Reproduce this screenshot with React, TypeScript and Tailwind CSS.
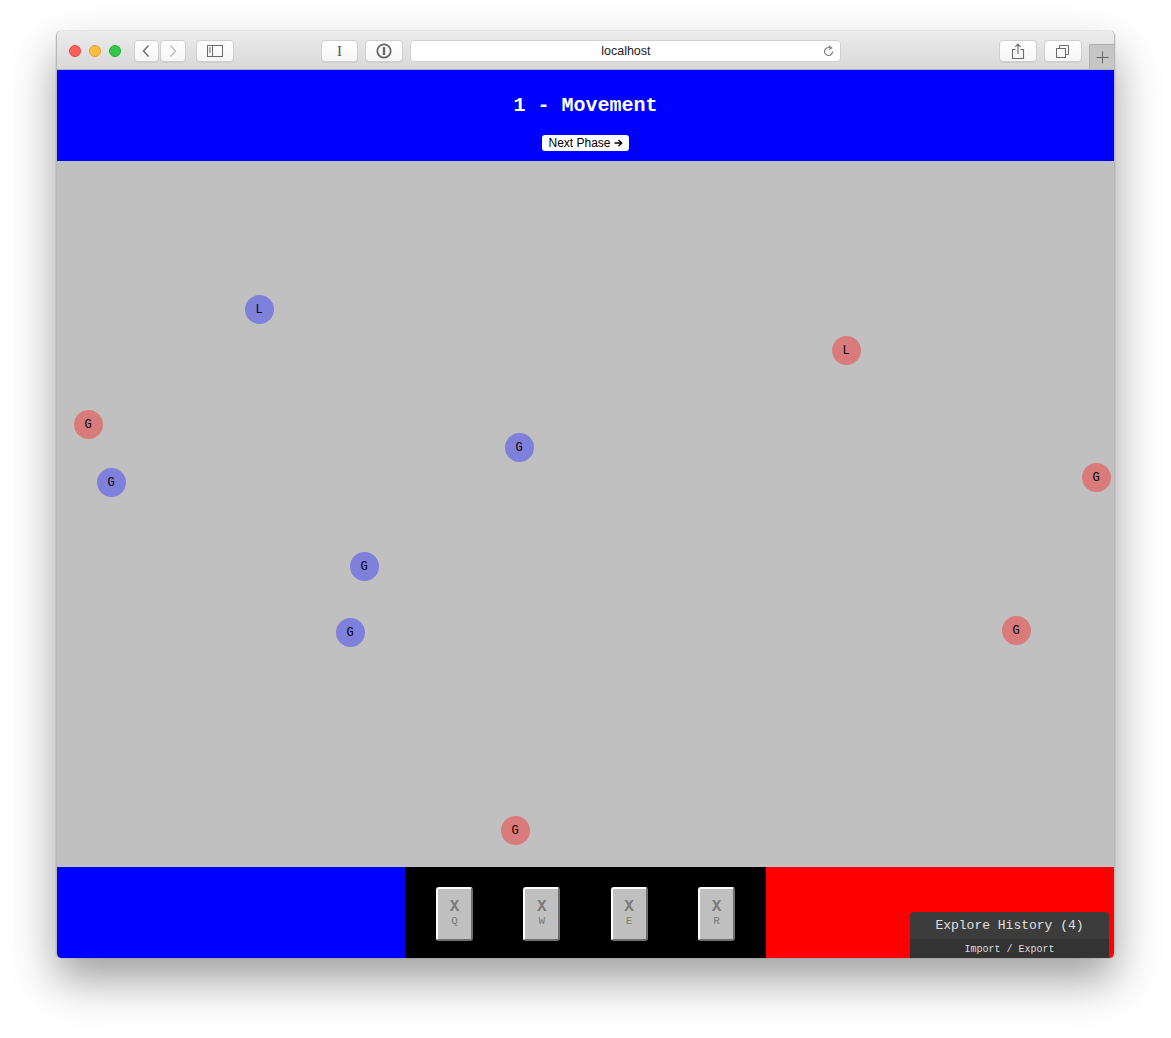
import React from "react";

type Unit = { x: number; y: number; t: string; side: "b" | "r" };

const units: Unit[] = [
  { x: 259, y: 309, t: "L", side: "b" },
  { x: 846, y: 350, t: "L", side: "r" },
  { x: 88, y: 424, t: "G", side: "r" },
  { x: 519, y: 447, t: "G", side: "b" },
  { x: 111, y: 482, t: "G", side: "b" },
  { x: 1096, y: 477, t: "G", side: "r" },
  { x: 364, y: 566, t: "G", side: "b" },
  { x: 350, y: 632, t: "G", side: "b" },
  { x: 1016, y: 630, t: "G", side: "r" },
  { x: 515, y: 830, t: "G", side: "r" },
];

const mono = { fontFamily: '"Liberation Mono", "Courier New", monospace' };

function TBtn({ w, children, ml }: { w: string; children?: React.ReactNode; ml: string }) {
  return (
    <div
      className={`${w} ${ml} h-[22px] rounded-[4px] border border-[#cfcfcf] bg-gradient-to-b from-white to-[#f6f6f6] shadow-[0_1px_0_rgba(0,0,0,0.06)] flex items-center justify-center text-[#6b6b6b]`}
    >
      {children}
    </div>
  );
}

function Card({ k }: { k: string }) {
  return (
    <div className="w-[37px] h-[54px] rounded-[3px] bg-[#c0c0c0] border-t-2 border-l-2 border-white border-r-2 border-b-2 border-r-[#6e6e6e] border-b-[#6e6e6e] flex flex-col items-center justify-center" style={mono}>
      <div className="text-[16px] font-bold leading-[16px] text-[#7a7a7a]">X</div>
      <div className="text-[11px] leading-[13px] text-[#7a7a7a]">{k}</div>
    </div>
  );
}

export default function App() {
  return (
    <div className="w-[1171px] h-[1038px] bg-white pt-[31px] pl-[56px]" style={{ fontFamily: '"Liberation Sans", Arial, sans-serif' }}>
      <div className="w-[1059px] h-[927px] rounded-[5px] overflow-hidden shadow-[0_22px_45px_rgba(0,0,0,0.38),0_0_1px_rgba(0,0,0,0.5)] flex flex-col border-x border-[#b8b8b8]">
        {/* title bar */}
        <div className="h-[39px] shrink-0 bg-gradient-to-b from-[#ececec] to-[#d8d8d8] border-b border-[#b4b4b4] flex items-center pl-[12px] pt-[2px]">
          <div className="flex gap-2">
            <div className="w-3 h-3 rounded-full bg-[#fc605c] border border-[#de4a45]" />
            <div className="w-3 h-3 rounded-full bg-[#fdbc40] border border-[#dea236]" />
            <div className="w-3 h-3 rounded-full bg-[#34c84a] border border-[#27aa35]" />
          </div>
          <TBtn w="w-[25px]" ml="ml-[13px]">
            <svg width="10" height="14" viewBox="0 0 10 14"><path d="M7.5 1.5 L2.5 7 L7.5 12.5" fill="none" stroke="#6a6a6a" strokeWidth="1.4" /></svg>
          </TBtn>
          <TBtn w="w-[26px]" ml="ml-[1px]">
            <svg width="10" height="14" viewBox="0 0 10 14"><path d="M2.5 1.5 L7.5 7 L2.5 12.5" fill="none" stroke="#bdbdbd" strokeWidth="1.4" /></svg>
          </TBtn>
          <TBtn w="w-[38px]" ml="ml-[10px]">
            <svg width="16" height="12" viewBox="0 0 16 12"><rect x="0.5" y="0.5" width="15" height="11" fill="none" stroke="#6a6a6a" /><line x1="5.5" y1="0.5" x2="5.5" y2="11.5" stroke="#6a6a6a" /><line x1="1.8" y1="3" x2="4" y2="3" stroke="#6a6a6a" /><line x1="1.8" y1="5" x2="4" y2="5" stroke="#6a6a6a" /><line x1="1.8" y1="7" x2="4" y2="7" stroke="#6a6a6a" /></svg>
          </TBtn>
          <TBtn w="w-[38px]" ml="ml-[87px]">
            <span className="text-[15px] text-[#555]" style={{ fontFamily: '"Liberation Serif", serif' }}>I</span>
          </TBtn>
          <TBtn w="w-[38px]" ml="ml-[7px]">
            <svg width="16" height="16" viewBox="0 0 16 16"><circle cx="8" cy="8" r="6.7" fill="none" stroke="#666" strokeWidth="1.8" /><rect x="6.8" y="4" width="2.4" height="8" rx="0.5" fill="#666" /></svg>
          </TBtn>
          <div className="ml-[7px] w-[433px] h-[22px] rounded-[4px] border border-[#cfcfcf] bg-white flex items-center relative">
            <span className="absolute left-0 right-0 text-center text-[12.5px] text-[#222]" style={{ fontFamily: '"Liberation Sans", Arial, sans-serif' }}>localhost</span>
            <svg className="absolute right-[5px] top-[4px]" width="13" height="13" viewBox="0 0 13 13"><path d="M10.5 6.5 A4 4 0 1 1 8 2.8" fill="none" stroke="#777" strokeWidth="1.1" /><path d="M7 0.8 L9.6 2.9 L7 4.6" fill="none" stroke="#777" strokeWidth="1.1" /></svg>
          </div>
          <TBtn w="w-[38px]" ml="ml-[158px]">
            <svg width="14" height="17" viewBox="0 0 14 17"><path d="M4.5 6.5 H1.5 V15.5 H12.5 V6.5 H9.5" fill="none" stroke="#6a6a6a" strokeWidth="1.1" /><path d="M7 11 V1.2 M4.3 3.8 L7 1.1 L9.7 3.8" fill="none" stroke="#6a6a6a" strokeWidth="1.1" /></svg>
          </TBtn>
          <TBtn w="w-[38px]" ml="ml-[7px]">
            <svg width="14" height="13" viewBox="0 0 14 13"><rect x="0.5" y="3.5" width="9" height="9" fill="none" stroke="#6a6a6a" /><path d="M3.5 3.5 V0.5 H12.5 V9.5 H9.5" fill="none" stroke="#6a6a6a" /></svg>
          </TBtn>
          <div className="ml-[7px] self-end w-[25px] h-[25px] bg-[#c6c6c6] border-l border-t border-[#b0b0b0] flex items-center justify-center">
            <svg width="13" height="13" viewBox="0 0 13 13"><path d="M6.5 0.5 V12.5 M0.5 6.5 H12.5" stroke="#666" strokeWidth="1" /></svg>
          </div>
        </div>

        {/* header */}
        <div className="h-[91px] shrink-0 bg-[#0000ff] flex flex-col items-center">
          <div className="mt-[25px] text-[20px] leading-[22px] font-bold text-white" style={mono}>1 - Movement</div>
          <div className="mt-[18px] h-[16px] px-[6px] bg-white rounded-[3px] text-[12px] leading-[16px] text-black flex items-center gap-[3px]" style={{ fontFamily: '"Liberation Sans", Arial, sans-serif' }}>
            <span>Next Phase</span>
            <svg width="9" height="8" viewBox="0 0 9 8"><path d="M0.5 4 H7.5 M4.5 1 L7.8 4 L4.5 7" fill="none" stroke="#000" strokeWidth="1.3" /></svg>
          </div>
        </div>

        {/* board */}
        <div className="h-[706px] shrink-0 bg-[#c0c0c0] relative">
          {units.map((u, i) => (
            <div
              key={i}
              className={`absolute w-[29px] h-[29px] rounded-full flex items-center justify-center pt-[1px] text-[12px] text-black ${u.side === "b" ? "bg-[#7f7fdc]" : "bg-[#d97b7b]"}`}
              style={{ left: u.x - 56 - 14.5 - 1, top: u.y - 161 - 14.5, ...mono }}
            >
              {u.t}
            </div>
          ))}
        </div>

        {/* bottom bar */}
        <div className="h-[91px] shrink-0 flex relative">
          <div className="w-[348px] bg-[#0000ff]" />
          <div className="w-[361px] bg-black flex items-center justify-between px-[31px] pt-[2px]">
            <Card k="Q" />
            <Card k="W" />
            <Card k="E" />
            <Card k="R" />
          </div>
          <div className="flex-1 bg-[#ff0000]" />
          <div className="absolute right-[5px] bottom-0 w-[199px] rounded-t-[4px] overflow-hidden" style={mono}>
            <div className="h-[27px] bg-[#3c3c3c] text-[13px] text-[#e0e0e0] flex items-center justify-center">Explore History (4)</div>
            <div className="h-[19px] bg-[#333333] text-[10px] text-[#dddddd] flex items-center justify-center pt-[1px]">Import / Export</div>
          </div>
        </div>
      </div>
    </div>
  );
}
